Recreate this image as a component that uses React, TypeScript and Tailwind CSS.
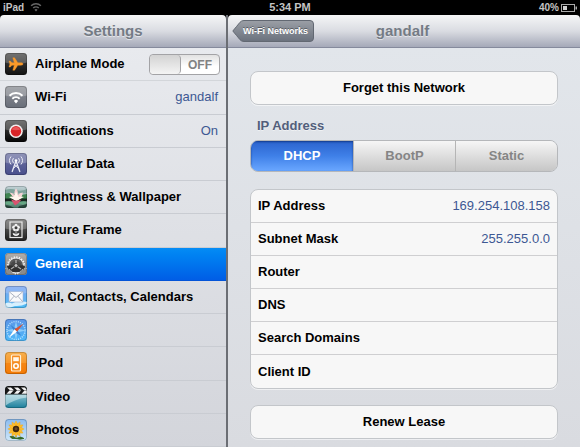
import { useState } from 'react';
import type { ReactNode } from 'react';
import clsx from 'clsx';

interface SettingsItem {
  id: string;
  label: string;
  icon: ReactNode;
  value?: string;
}

const WifiArcs = ({ color }: { color: string }) => (
  <g fill="none" stroke={color} strokeWidth="2">
    <path d="M4.5 9.7a9.3 9.3 0 0 1 13 0" />
    <path d="M7.3 12.7a5.3 5.3 0 0 1 7.4 0" />
    <path d="M11 17.4l-2.1-2.5a3 3 0 0 1 4.2 0z" fill={color} stroke="none" />
  </g>
);

interface TileProps {
  id: string;
  from: string;
  to: string;
  gloss?: boolean;
  children: ReactNode;
}

// Rounded app tile, the artwork is clipped to the corners
const Tile = ({ id, from, to, gloss = true, children }: TileProps) => (
  <svg viewBox="0 0 22 22" className="size-[22px] shrink-0" aria-hidden="true">
    <defs>
      <linearGradient id={`${id}-bg`} x1="0" y1="0" x2="0" y2="1">
        <stop offset="0" stopColor={from} />
        <stop offset="1" stopColor={to} />
      </linearGradient>
      <clipPath id={`${id}-clip`}>
        <rect width="22" height="22" rx="3.5" />
      </clipPath>
    </defs>
    <g clipPath={`url(#${id}-clip)`}>
      <rect width="22" height="22" fill={`url(#${id}-bg)`} />
      {gloss && <path d="M0 0h22v9.5q-11 3-22 0z" fill="#fff" opacity=".22" />}
      {children}
    </g>
    <rect x=".5" y=".5" width="21" height="21" rx="3.2" fill="none" stroke="#000" strokeOpacity=".2" />
  </svg>
);

const AirplaneIcon = () => (
  <Tile id="airplane" from="#4a4a4a" to="#111111">
    <path
      d="M18 11c0-.8-.9-1.2-2-1.2h-3.2L9.6 4.8H7.8l1.5 5H7L5.300 8H4l.9 3-.9 3h1.300L7 12.200h2.300l-1.500 5h1.800l3.200-5H16c1.100 0 2-.4 2-1.200z"
      fill="#fb9a2a"
      stroke="#fb9a2a"
      strokeWidth=".4"
    />
  </Tile>
);

const WifiIcon = () => (
  <Tile id="wifi" from="#8d9096" to="#696e79">
    <WifiArcs color="#fff" />
  </Tile>
);

const NotificationsIcon = () => (
  <Tile id="notifications" from="#4c4c4c" to="#050505">
    <circle cx="11" cy="11.2" r="6.8" fill="#f4eeee" />
    <circle cx="11" cy="11.2" r="5.200" fill="#d92427" />
    <path d="M6.600 9.400a5 5 0 0 1 8.800 0q-4.400 1.500-8.800 0z" fill="#ea5557" />
  </Tile>
);

const CellularIcon = () => (
  <Tile id="cellular" from="#6f74a4" to="#494f8c">
    <g fill="none" stroke="#e9eaf5" strokeLinecap="round">
      <path d="M11 8L7.200 18.500M11 8l3.800 10.500" strokeWidth="1.300" />
      <path d="M9.800 12l3.800 3.500M12.200 12l-3.800 3.500" strokeWidth=".9" />
      <path d="M8.200 5.400a3.300 3.300 0 0 0 0 4.200M13.800 5.400a3.300 3.300 0 0 1 0 4.200M5.800 3.800a6 6 0 0 0 0 7.400M16.200 3.800a6 6 0 0 1 0 7.400" />
    </g>
    <circle cx="11" cy="7.500" r="1.300" fill="#fff" />
  </Tile>
);

const LotusIcon = () => (
  <Tile id="lotus" from="#c3d3d8" to="#4f7f6b" gloss={false}>
    <path d="M0 4q6-2 11 0t11-1v4H0z" fill="#7fa39c" />
    <path d="M0 7.500q5-1.500 10 1l-2 5H0zM22 8l-8 1.500 2 4.500h6z" fill="#3f8351" />
    <path d="M0 12.500h22v3H0z" fill="#16261f" />
    <path d="M0 16q5-2 9 1l-3 2-6-1zM13 17q5-3 9-1l-3 3z" fill="#66a884" />
    <path d="M0 19.500q5-1 9 2.500H0zM14 20l8-2v4h-9z" fill="#29483d" />
    <path d="M11 15L4.500 6.500q3.500 0 5 2.500Q9 4.500 11 2.500 13.300 4.500 12.800 9q2-2.500 5-2.500Q17.500 13 11 15z" fill="#f6d3d5" />
    <path d="M11 15L4 11q2.500-.8 5 0L11 5.500l2.500 5.500q3-1 5.500 0z" fill="#fff6ee" />
    <path d="M6 13.500q5 1.800 10.500 0L13 17.500l-3 2z" fill="#d9536f" />
  </Tile>
);

const FrameIcon = () => (
  <Tile id="frame" from="#6c6c6c" to="#1f1f1f">
    <rect x="5" y="3" width="12" height="15.500" fill="none" stroke="#e8e8e8" strokeWidth="1.200" />
    <g fill="#f2f2f2">
      <circle cx="11" cy="6.400" r="1.600" />
      <circle cx="8.800" cy="8.200" r="1.600" />
      <circle cx="13.200" cy="8.200" r="1.600" />
      <circle cx="9.700" cy="10.600" r="1.600" />
      <circle cx="12.300" cy="10.600" r="1.600" />
    </g>
    <circle cx="11" cy="8.700" r="1.500" fill="#3c3c3c" />
    <path d="M11 12v5M11 16.500q-3 0-3-2 2.500 0 3 2zM11 16.500q3 0 3-2-2.500 0-3 2z" fill="#f2f2f2" stroke="#f2f2f2" strokeWidth=".7" />
  </Tile>
);

const GearIcon = () => (
  <Tile id="gear" from="#b2afab" to="#77787a" gloss={false}>
    <circle cx="11" cy="12.500" r="8.300" fill="none" stroke="#f4f4f4" strokeWidth="1.800" strokeDasharray="1.300 1.307" />
    <circle cx="11" cy="12.500" r="7.500" fill="#5a5a5a" stroke="#ececec" strokeWidth="1" />
    <path d="M5.500 11.500a6 6 0 0 1 11 0L13 13H9z" fill="#484848" />
    <path d="M2 13q4-1.500 7 0l2 2 2-2q3-1.500 7 0l-1 6H3z" fill="#303030" />
    <path d="M11 7v5M11 12.500L6 16M11 12.500l5 3.500" stroke="#a9a9a9" strokeWidth="1.400" />
    <circle cx="11" cy="12.500" r="2" fill="#c1c1c1" stroke="#2a2a2a" strokeWidth=".8" />
    <path d="M0 16q4.500-.5 7 2.500l2 3.500H0zM22 16q-4.500-.5-7 2.500L13 22h9z" fill="#8b8b8b" />
    <path d="M0 15.500q5 0 8 4.500M22 15.500q-5 0-8 4.500" fill="none" stroke="#d4d4d4" strokeWidth="1" strokeDasharray="1.200 .8" />
  </Tile>
);

const MailIcon = () => (
  <Tile id="mail" from="#7fa6f0" to="#4ebdf8" gloss={false}>
    <path d="M0 0h22v7q-11 2-22 0z" fill="#b8cefa" opacity=".35" />
    <path d="M0 17.500q4-2 7 0 5-3.500 15-1.500v1.500q-6 3-12 2.500-4 2-10 2z" fill="#edf9ff" opacity=".85" />
    <rect x="4" y="5.500" width="14" height="10.500" fill="#f8f9fb" stroke="#9fb0cf" strokeWidth=".6" />
    <path d="M4.300 5.800L11 11.500l6.700-5.700M4.300 15.700l4.800-5.500M17.700 15.700l-4.800-5.500" fill="none" stroke="#98a1b3" strokeWidth=".8" />
  </Tile>
);

const SafariIcon = () => (
  <Tile id="safari" from="#5b94e6" to="#4eb9fb" gloss={false}>
    <circle cx="11" cy="11.500" r="9" fill="none" stroke="#b9e2fd" strokeWidth="1.500" strokeDasharray="1 1.200" />
    <path d="M11 2l1.800 7.700 8.200 1.800-8.200 1.800L11 21l-1.800-7.700L1 11.500l8.200-1.800z" fill="#8dccf9" />
    <path d="M5.500 6l5.500 3.500L16.500 17 10 13.500z" fill="#3d83d2" />
    <path d="M18.500 4.500l-6.500 8.300-2.500-2.600z" fill="#dc5232" />
    <path d="M3.500 19l6-8.800 2.500 2.600z" fill="#fff" />
  </Tile>
);

const IpodIcon = () => (
  <Tile id="ipod" from="#f8b04e" to="#f67f08" gloss={false}>
    <path d="M0 11h22v11H0z" fill="#f47500" opacity=".5" />
    <rect x="6.500" y="3" width="9" height="16" rx="1" fill="#f58d20" stroke="#fff2da" strokeWidth="1.200" />
    <rect x="8.200" y="5.200" width="5.600" height="4" fill="#fff7ea" />
    <circle cx="11" cy="14" r="2.200" fill="none" stroke="#fff" strokeWidth="1.600" />
  </Tile>
);

const VideoIcon = () => (
  <Tile id="video" from="#d6f0f3" to="#1b7f9c" gloss={false}>
    <path d="M0 8.500h22v3Q9 13 0 20z" fill="#e4f4f5" opacity=".5" />
    <path d="M0 0h22v8.500H0z" fill="#181818" />
    <path d="M2 1.500h4l3 2.700H5zM9 1.500h4l3 2.700h-4zM16 1.500h4l2 2.700h-3z" fill="#f2f2f2" />
    <path d="M4.500 4.500h4l-3 3.300h-4zM12 4.500h4l-3 3.300H9zM19.500 4.500h3v3.300h-6z" fill="#f2f2f2" />
  </Tile>
);

const PETALS = [0, 30, 60, 90, 120, 150, 180, 210, 240, 270, 300, 330];

const PhotosIcon = () => (
  <Tile id="photos" from="#8bbcf0" to="#cfe7fa" gloss={false}>
    <path d="M11 13v7M11 19.500q-5 1-6-2 4-1 6 2zM11 19.500q4 1.500 8 0-3-3-8 0z" fill="#3a6b2a" stroke="#2f6420" strokeWidth=".7" />
    {PETALS.map((angle) => (
      <path
        key={angle}
        d="M11 1.800q2.200 2.700 1.500 5.700h-3q-.7-3 1.500-5.700z"
        fill="#fbbd2c"
        stroke="#ee9c14"
        strokeWidth=".3"
        transform={`rotate(${angle} 11 10)`}
      />
    ))}
    <circle cx="11" cy="10" r="3.200" fill="#40280f" />
    <circle cx="11" cy="9.700" r="1.500" fill="#6b4a24" />
  </Tile>
);

const ITEMS: SettingsItem[] = [
  { id: 'wifi', label: 'Wi-Fi', icon: <WifiIcon />, value: 'gandalf' },
  { id: 'notifications', label: 'Notifications', icon: <NotificationsIcon />, value: 'On' },
  { id: 'cellular', label: 'Cellular Data', icon: <CellularIcon /> },
  { id: 'brightness', label: 'Brightness & Wallpaper', icon: <LotusIcon /> },
  { id: 'frame', label: 'Picture Frame', icon: <FrameIcon /> },
  { id: 'general', label: 'General', icon: <GearIcon /> },
  { id: 'mail', label: 'Mail, Contacts, Calendars', icon: <MailIcon /> },
  { id: 'safari', label: 'Safari', icon: <SafariIcon /> },
  { id: 'ipod', label: 'iPod', icon: <IpodIcon /> },
  { id: 'video', label: 'Video', icon: <VideoIcon /> },
  { id: 'photos', label: 'Photos', icon: <PhotosIcon /> },
];

const MODES = ['DHCP', 'BootP', 'Static'];

const DETAILS = [
  { label: 'IP Address', value: '169.254.108.158' },
  { label: 'Subnet Mask', value: '255.255.0.0' },
  { label: 'Router', value: '' },
  { label: 'DNS', value: '' },
  { label: 'Search Domains', value: '' },
  { label: 'Client ID', value: '' },
];

const StatusBar = () => (
  <div className="grid h-[15px] shrink-0 grid-cols-3 items-center px-[3px] text-[10px] leading-[15px] font-bold text-[#c4c4c4]">
    <div className="flex items-center gap-[6px]">
      <span>iPad</span>
      <svg viewBox="3 5 16 14" className="h-[11px] w-3" aria-hidden="true">
        <WifiArcs color="#666" />
      </svg>
    </div>
    <span className="text-center text-[11px]">5:34 PM</span>
    <div className="flex items-center justify-end gap-[2px]">
      <span>40%</span>
      <svg viewBox="0 0 16 8" className="h-2 w-4" aria-hidden="true">
        <rect x=".5" y=".5" width="13" height="7" fill="none" stroke="#aaa" />
        <rect x="2" y="2" width="4" height="4" fill="#d0d0d0" />
        <rect x="14.500" y="2.500" width="1.500" height="3" fill="#aaa" />
      </svg>
    </div>
  </div>
);

const AirplaneRow = () => {
  const [enabled, setEnabled] = useState(false);

  return (
    <label className="flex flex-1 items-center gap-2 border-b border-[#d3d6da] pr-[6px] pl-[5px]">
      <AirplaneIcon />
      <span className="flex-1">Airplane Mode</span>
      <input
        type="checkbox"
        role="switch"
        className="peer sr-only"
        checked={enabled}
        onChange={(e) => setEnabled(e.target.checked)}
      />
      <span
        className={clsx(
          'flex h-[21px] w-[71px] items-stretch overflow-hidden rounded border border-[#a3a3a6] bg-linear-to-b from-[#e2e2e2] to-white to-60% text-xs text-[#828282]',
          enabled && 'flex-row-reverse'
        )}
      >
        <span className="w-[31px] rounded-sm border-r border-[#a3a3a6] bg-linear-to-b from-[#d3d3d3] to-[#f4f4f4]" />
        <span className="flex-1 text-center leading-5">{enabled ? 'ON' : 'OFF'}</span>
      </span>
    </label>
  );
};

const Sidebar = () => {
  const [active, setActive] = useState('general');

  return (
    <aside className="flex flex-col border-r-2 border-[#6b6e74] bg-black">
      <header className="flex h-[33px] shrink-0 items-center justify-center rounded-t-[4px] border-b border-[#858a9c] bg-linear-to-b from-[#f5f6f7] via-[#dadce2] to-[#a5a9b8]">
        <h1 className="text-[15px] leading-5 text-[#747b85] text-shadow-[0_1px_0_#ffffff80]">Settings</h1>
      </header>
      <nav className="flex flex-1 flex-col bg-linear-to-b from-[#e8eaee] to-[#d3d5db]">
        <AirplaneRow />
        {ITEMS.map((item) => (
          <a
            key={item.id}
            href={`#${item.id}`}
            onClick={() => setActive(item.id)}
            className={clsx(
              'flex flex-1 items-center gap-2 border-b pr-2 pl-[5px]',
              active === item.id
                ? 'border-[#0254d8] bg-linear-to-b from-[#058cf5] to-[#015de6] text-white'
                : 'border-[#c9ccd2]'
            )}
          >
            {item.icon}
            <span className="flex-1 whitespace-nowrap">{item.label}</span>
            {item.value && <span className="font-normal text-[#3d5893]">{item.value}</span>}
          </a>
        ))}
      </nav>
    </aside>
  );
};

const BackButton = () => (
  <button type="button" className="relative h-[22px] w-[82px] pl-[5px] text-[9px] font-bold text-white">
    <svg viewBox="0 0 82 22" className="absolute inset-0 size-full" aria-hidden="true">
      <defs>
        <linearGradient id="back-bg" x1="0" y1="0" x2="0" y2="1">
          <stop offset="0" stopColor="#9b9fa6" />
          <stop offset="1" stopColor="#6a717d" />
        </linearGradient>
      </defs>
      <path
        d="M.8 11Q5 6 8 2.300 9.500.5 12 .5h66q3.500 0 3.500 3.500v14q0 3.500-3.500 3.500H12q-2.500 0-4-1.800Q5 16 .8 11z"
        fill="url(#back-bg)"
        stroke="#626872"
      />
    </svg>
    <span className="relative whitespace-nowrap text-shadow-[0_-1px_0_#00000060]">Wi-Fi Networks</span>
  </button>
);

const NetworkDetail = () => {
  const [mode, setMode] = useState('DHCP');

  return (
    <main className="flex flex-col bg-black">
      <header className="grid h-[33px] shrink-0 grid-cols-[1fr_auto_1fr] items-center rounded-t-[4px] border-b border-[#858a9c] bg-linear-to-b from-[#f5f6f7] via-[#dadce2] to-[#a5a9b8] pr-[7px] pl-1">
        <BackButton />
        <h2 className="text-[15px] leading-5 text-[#747b85] text-shadow-[0_1px_0_#ffffff80]">gandalf</h2>
      </header>
      <div className="flex flex-1 flex-col bg-linear-to-b from-[#e2e6eb] to-[#d9dbe0] px-[22px] pt-[23px] pb-2">
        <button type="button" className="h-[34px] rounded-lg border border-[#c3c6ca] bg-[#f7f7f7] font-bold shadow-[0_1px_0_#ffffff90]">
          Forget this Network
        </button>

        <fieldset className="mt-3">
          <legend className="px-[7px] leading-[18px] text-[#525e7b] text-shadow-[0_1px_0_#ffffff80]">IP Address</legend>
          <div className="mt-[5px] grid h-8 grid-cols-3 overflow-hidden rounded-lg border border-[#b5b7ba]">
            {MODES.map((name) => (
              <label
                key={name}
                className={clsx(
                  'flex items-center justify-center border-l first:border-l-0',
                  mode === name
                    ? 'border-[#2458b0] bg-linear-to-b from-[#2c63cd] via-[#3f80e8] to-[#6aa7ff] text-white inset-shadow-[0_1px_2px_#123a8a]'
                    : 'border-[#b5b5b5] bg-linear-to-b from-[#f6f6f6] to-[#c6c6c6] text-[#858585]'
                )}
              >
                <input
                  type="radio"
                  name="mode"
                  className="sr-only"
                  value={name}
                  checked={mode === name}
                  onChange={() => setMode(name)}
                />
                {name}
              </label>
            ))}
          </div>
        </fieldset>

        <dl className="mt-[17px] divide-y divide-[#cfcfd1] rounded-lg border border-[#c3c6ca] bg-[#f7f7f7] shadow-[0_1px_0_#ffffff90]">
          {DETAILS.map((row) => (
            <div key={row.label} className="flex h-[33px] items-center justify-between px-[7px]">
              <dt>{row.label}</dt>
              <dd className="font-normal text-[#3d5893]">{row.value}</dd>
            </div>
          ))}
        </dl>

        <button type="button" className="mt-4 h-[34px] rounded-lg border border-[#c3c6ca] bg-[#f7f7f7] font-bold shadow-[0_1px_0_#ffffff90]">
          Renew Lease
        </button>
      </div>
    </main>
  );
};

const App = () => {
  return (
    <div className="flex min-h-screen flex-col bg-black font-['Liberation_Sans',Arial,sans-serif] text-[13px] leading-4 font-bold text-black">
      <StatusBar />
      <div className="grid flex-1 grid-cols-[228px_1fr]">
        <Sidebar />
        <NetworkDetail />
      </div>
    </div>
  );
};

export default App;
